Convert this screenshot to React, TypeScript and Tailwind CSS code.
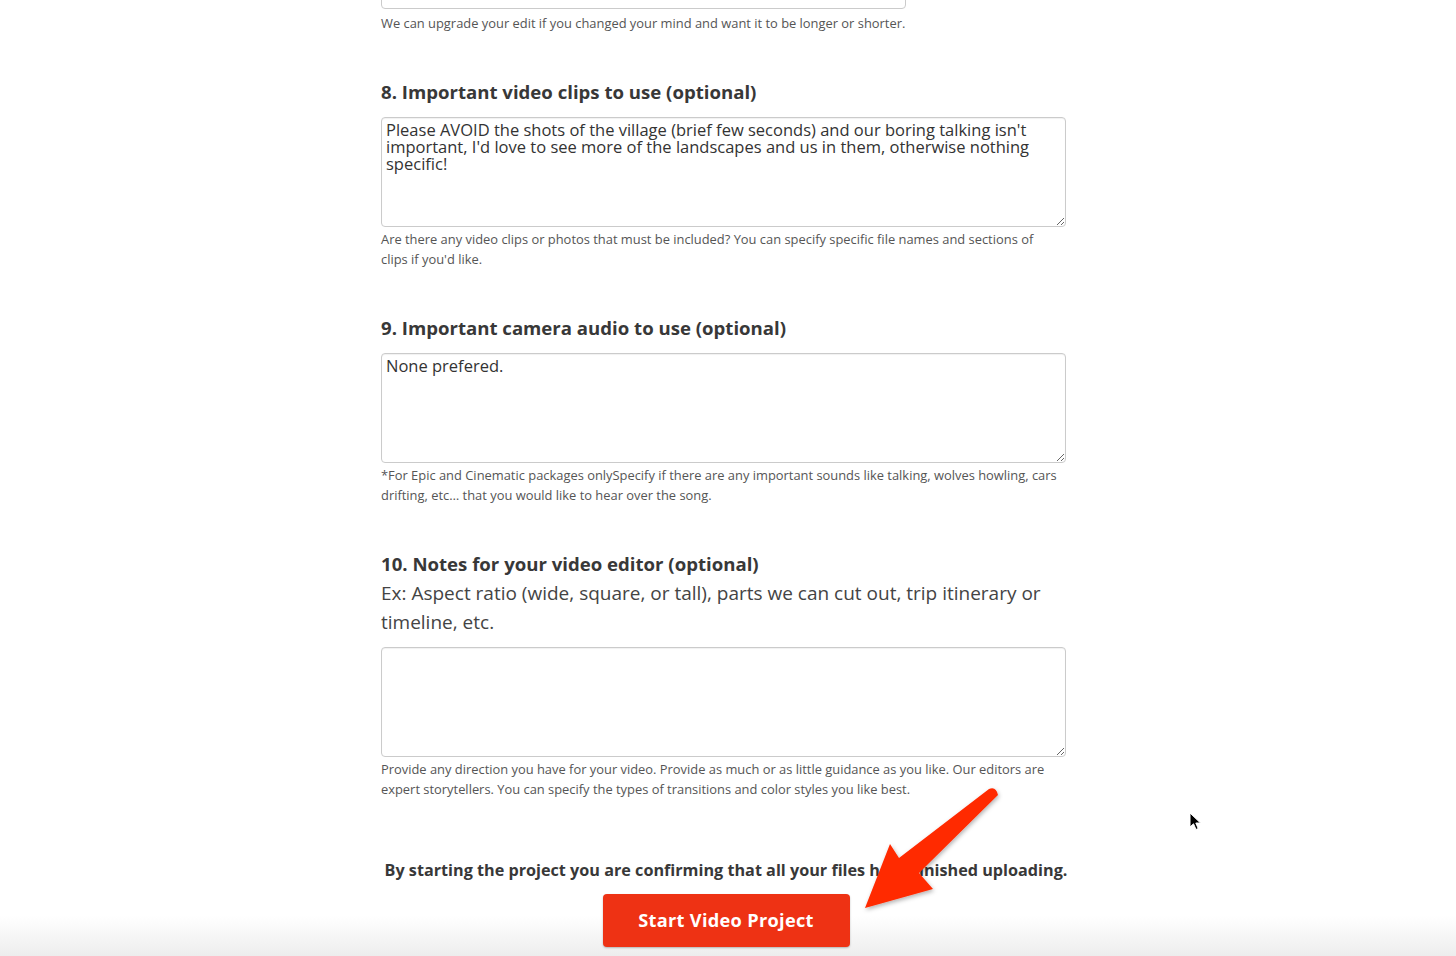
const font = { fontFamily: '"Open Sans", "Liberation Sans", sans-serif' };

function Field({
  title,
  value,
  help,
}: {
  title: string;
  value: string;
  help: string;
}) {
  return (
    <div className="mt-[46px]">
      <h2 className="text-[18.6px] font-bold leading-[26px] text-[#383838]">{title}</h2>
      <textarea
        readOnly
        defaultValue={value}
        className="mt-[12px] block h-[110px] w-[685px] rounded-[4px] border border-[#cbcbcb] bg-white px-[4px] pb-[4px] pt-[3px] text-[16.5px] leading-[17px] text-[#333] shadow-[inset_0_1px_1px_rgba(0,0,0,0.06)] outline-none"
        style={font}
      />
      <p className="mt-[2px] w-[678px] text-[12.9px] leading-[20px] text-[#555]">{help}</p>
    </div>
  );
}

export default function App() {
  return (
    <div className="relative h-[956px] w-full overflow-hidden bg-white" style={font}>
      {/* bottom fade */}
      <div className="pointer-events-none absolute inset-x-0 bottom-0 h-[40px] bg-gradient-to-b from-white to-[#ededed]" />

      <div className="relative ml-[381px] w-[690px]">
        {/* previous field, cut off */}
        <div className="-mt-[30px] h-[39px] w-[525px] rounded-[4px] border border-[#cbcbcb] bg-white" />
        <p className="mt-[4px] text-[12.9px] leading-[20px] text-[#555]">
          We can upgrade your edit if you changed your mind and want it to be longer or shorter.
        </p>

        <Field
          title="8. Important video clips to use (optional)"
          value="Please AVOID the shots of the village (brief few seconds) and our boring talking isn't important, I'd love to see more of the landscapes and us in them, otherwise nothing specific!"
          help="Are there any video clips or photos that must be included? You can specify specific file names and sections of clips if you'd like."
        />
        <Field
          title="9. Important camera audio to use (optional)"
          value="None prefered."
          help="*For Epic and Cinematic packages onlySpecify if there are any important sounds like talking, wolves howling, cars drifting, etc… that you would like to hear over the song."
        />

        <div className="mt-[46px]">
          <h2 className="text-[18.6px] font-bold leading-[26px] text-[#383838]">
            10. Notes for your video editor (optional)
          </h2>
          <p className="mt-[2px] w-[685px] text-[19px] leading-[29px] text-[#444]">
            Ex: Aspect ratio (wide, square, or tall), parts we can cut out, trip itinerary or timeline, etc.
          </p>
          <textarea
            readOnly
            className="mt-[10px] block h-[110px] w-[685px] rounded-[4px] border border-[#cbcbcb] bg-white px-[4px] pb-[4px] pt-[3px] text-[16.5px] leading-[17px] text-[#333] shadow-[inset_0_1px_1px_rgba(0,0,0,0.06)] outline-none"
            style={font}
          />
          <p className="mt-[2px] w-[678px] text-[12.9px] leading-[20px] text-[#555]">
            Provide any direction you have for your video. Provide as much or as little guidance as you like. Our editors are
            expert storytellers. You can specify the types of transitions and color styles you like best.
          </p>
        </div>

        <p className="mt-[59px] whitespace-nowrap text-center text-[16.2px] font-bold leading-[24px] text-[#383838]">
          By starting the project you are confirming that all your files have finished uploading.
        </p>
        <div className="mt-[12px] flex justify-center">
          <button className="h-[53px] w-[247px] rounded-[4px] bg-[#ee3214] text-[18.2px] font-bold tracking-[0.3px] text-white shadow-[0_1px_2px_rgba(0,0,0,0.25)]">
            Start Video Project
          </button>
        </div>
      </div>

      {/* red annotation arrow */}
      <svg className="pointer-events-none absolute left-0 top-0" width="1456" height="956">
        <defs>
          <filter id="sh" x="-20%" y="-20%" width="140%" height="140%">
            <feDropShadow dx="1" dy="2" stdDeviation="2" floodColor="#000" floodOpacity="0.3" />
          </filter>
        </defs>
        <path
          d="M989 789 Q996 786 998 795 L919 873 L933 889 L865 908 L890 844 L899 858 Z"
          fill="#ff2a00"
          filter="url(#sh)"
        />
      </svg>

      {/* mouse cursor */}
      <svg className="pointer-events-none absolute left-[1189px] top-[812px]" width="14" height="20" viewBox="0 0 14 20">
        <path d="M1 1 L1 15 L4.5 11.8 L7 17.5 L9.2 16.5 L6.8 11 L11.5 11 Z" fill="#000" stroke="#fff" strokeWidth="1" />
      </svg>
    </div>
  );
}
